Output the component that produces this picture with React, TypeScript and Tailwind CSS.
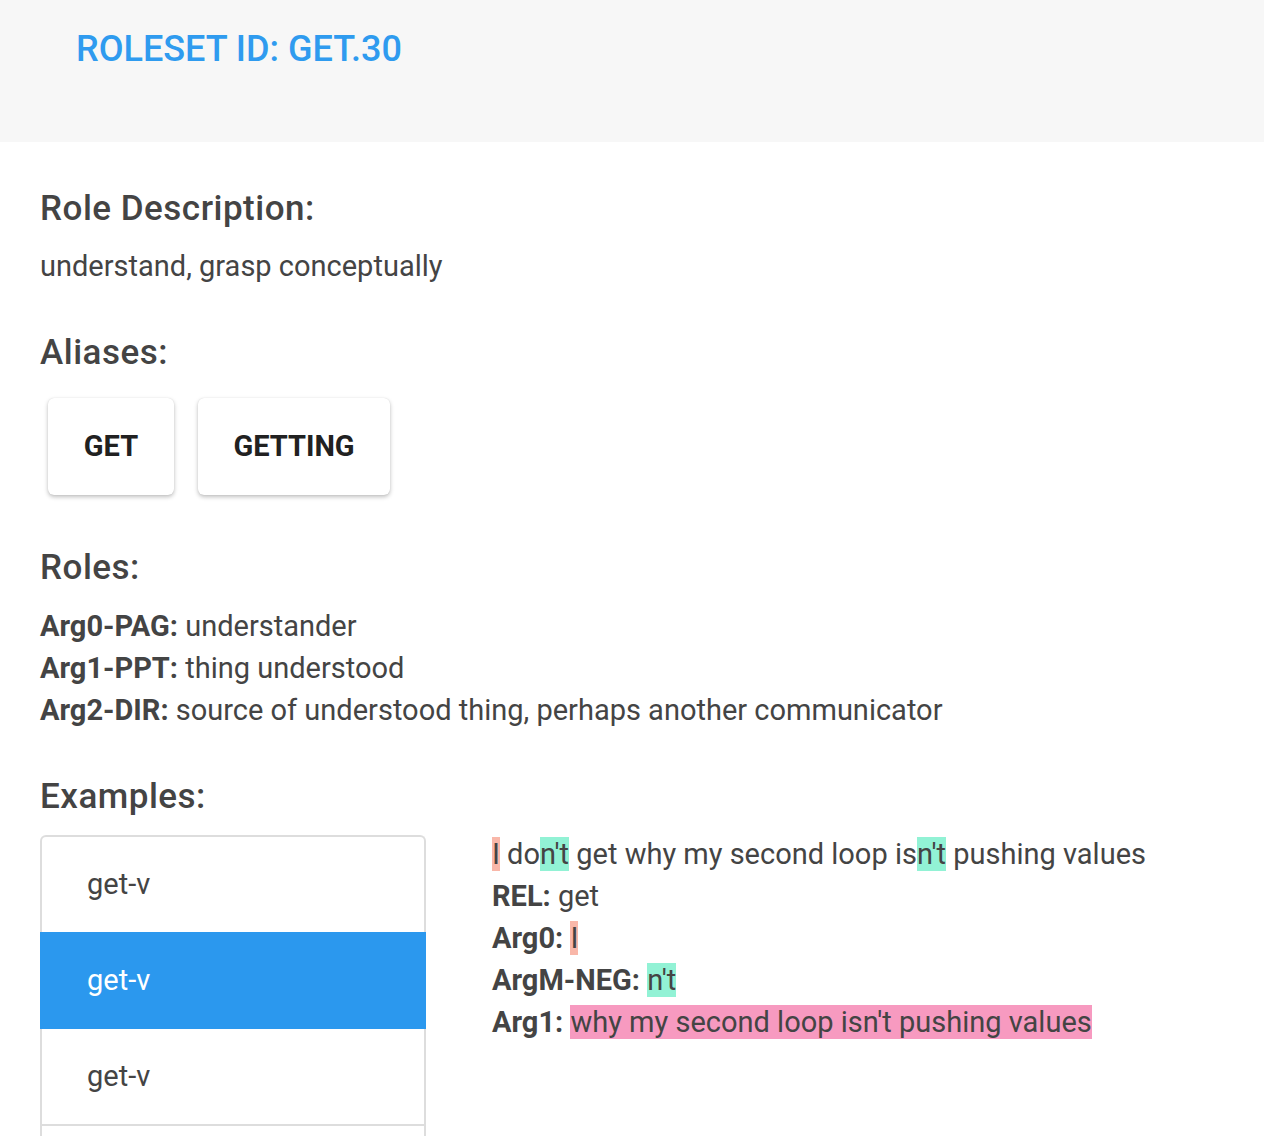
const roles = [
  { label: "Arg0-PAG:", text: "understander" },
  { label: "Arg1-PPT:", text: "thing understood" },
  { label: "Arg2-DIR:", text: "source of understood thing, perhaps another communicator" },
];

const examples = ["get-v", "get-v", "get-v", "get-v"];

export default function App() {
  return (
    <div className="min-h-[1136px] bg-white text-[#444444]" style={{ fontFamily: "Roboto, 'Liberation Sans', sans-serif" }}>
      <div className="h-[142px] bg-[#f7f7f7] pl-[76px] pt-[28px]">
        <h1 className="text-[36px] leading-[43px] font-medium text-[#2f9bef]">ROLESET ID: GET.30</h1>
      </div>

      <div className="pl-[40px] pt-[46px]">
        <h2 className="text-[35px] leading-[42px] font-medium tracking-[0.5px]">Role Description:</h2>
        <p className="mt-[15px] text-[29px] leading-[42px]">understand, grasp conceptually</p>

        <h2 className="mt-[45px] text-[35px] leading-[42px] font-medium tracking-[0.5px]">Aliases:</h2>
        <div className="mt-[24px] flex gap-[24px] pl-[8px]">
          <button className="h-[97px] w-[126px] rounded-[6px] bg-white text-[29px] font-bold text-[#212121] shadow-[0_2px_4px_rgba(0,0,0,0.25),0_0_1px_rgba(0,0,0,0.15)]">GET</button>
          <button className="h-[97px] w-[192px] rounded-[6px] bg-white text-[29px] font-bold text-[#212121] shadow-[0_2px_4px_rgba(0,0,0,0.25),0_0_1px_rgba(0,0,0,0.15)]">GETTING</button>
        </div>

        <h2 className="mt-[52px] text-[35px] leading-[42px] font-medium tracking-[0.5px]">Roles:</h2>
        <div className="mt-[16px] text-[29px] leading-[42px]">
          {roles.map((r) => (
            <div key={r.label}>
              <span className="font-bold">{r.label}</span> {r.text}
            </div>
          ))}
        </div>

        <h2 className="mt-[45px] text-[35px] leading-[42px] font-medium tracking-[0.5px]">Examples:</h2>
        <div className="mt-[17px] flex gap-[66px]">
          <div className="w-[386px] shrink-0">
            {examples.map((e, i) => (
              <div
                key={i}
                className={
                  i === 1
                    ? "flex h-[97px] items-center bg-[#2b98ee] pl-[47px] text-[29px] text-white"
                    : i === 0
                      ? "flex h-[97px] items-center rounded-t-[6px] border-2 border-[#dddddd] border-b-0 pl-[45px] text-[29px]"
                      : "flex h-[97px] items-center border-x-2 border-b-2 border-[#dddddd] pl-[45px] text-[29px]"
                }
              >
                {e}
              </div>
            ))}
          </div>
          <div className="-mt-[2px] text-[29px] leading-[42px]">
            <div>
              <span className="bg-[#f9b7a9]">I</span> do<span className="bg-[#92f2d5]">n't</span> get why my second loop is
              <span className="bg-[#92f2d5]">n't</span> pushing values
            </div>
            <div>
              <span className="font-bold">REL:</span> get
            </div>
            <div>
              <span className="font-bold">Arg0:</span> <span className="bg-[#f9b7a9]">I</span>
            </div>
            <div>
              <span className="font-bold">ArgM-NEG:</span> <span className="bg-[#92f2d5]">n't</span>
            </div>
            <div>
              <span className="font-bold">Arg1:</span> <span className="bg-[#f79ac0]">why my second loop isn't pushing values</span>
            </div>
          </div>
        </div>
      </div>
    </div>
  );
}
